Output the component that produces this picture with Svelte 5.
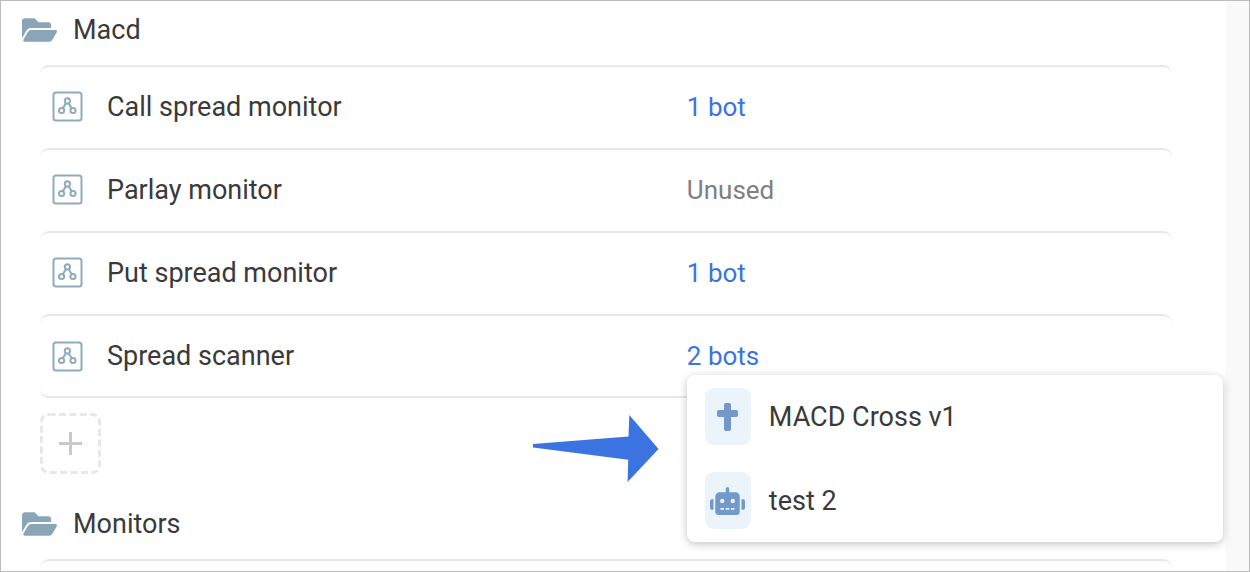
<script lang="ts">
  type Automation = { name: string; bots: string[] };
  type Folder = { name: string; automations: Automation[] };

  const folders: Folder[] = [
    {
      name: "Macd",
      automations: [
        { name: "Call spread monitor", bots: ["MACD Cross v1"] },
        { name: "Parlay monitor", bots: [] },
        { name: "Put spread monitor", bots: ["MACD Cross v1"] },
        { name: "Spread scanner", bots: ["MACD Cross v1", "test 2"] },
      ],
    },
    {
      name: "Monitors",
      automations: [{ name: "", bots: [] }],
    },
  ];

  let openMenu = $state("Spread scanner");

  function toggle(name: string) {
    openMenu = openMenu === name ? "" : name;
  }
</script>

<div class="frame">
  <main class="page">
    {#each folders as folder (folder.name)}
      <section class="folder">
        <h2 class="folder-title">
          <svg class="folder-icon" viewBox="0 64 576 384" aria-hidden="true">
            <path d="M572.694 292.093L500.27 416.248A63.997 63.997 0 0 1 444.989 448H45.025c-18.523 0-30.064-20.093-20.731-36.093l72.424-124.155A64 64 0 0 1 152 256h399.964c18.523 0 30.064 20.093 20.73 36.093zM152 224h328v-48c0-26.51-21.49-48-48-48H272l-64-64H48C21.49 64 0 85.49 0 112v278.046l69.077-118.418C86.214 242.25 117.989 224 152 224z" />
          </svg>
          {folder.name}
        </h2>

        <ul class="automations">
          {#each folder.automations as automation (automation.name)}
            <li class="row">
              {#if automation.name}
                <div class="name">
                  <svg class="automation-icon" viewBox="0 0 31 31" aria-hidden="true">
                    <rect x="1.5" y="1.5" width="28" height="28" rx="2.5" />
                    <path d="M14 12.4 10.6 17.4M16.8 12.4 19.8 17.4" />
                    <circle cx="15.4" cy="9.9" r="2.6" />
                    <circle cx="9.6" cy="19.5" r="2.6" />
                    <circle cx="21" cy="19.5" r="2.6" />
                  </svg>
                  <span>{automation.name}</span>
                </div>
                <div class="usage">
                  {#if automation.bots.length}
                    <button
                      type="button"
                      class="bots"
                      aria-expanded={openMenu === automation.name}
                      onclick={() => toggle(automation.name)}
                    >
                      {automation.bots.length} {automation.bots.length === 1 ? "bot" : "bots"}
                    </button>
                  {:else}
                    <span class="unused">Unused</span>
                  {/if}

                  {#if openMenu === automation.name}
                    <div class="menu">
                      {#each automation.bots as bot (bot)}
                        <a class="bot" href="#bot">
                          <span class="badge">
                            {#if bot === "test 2"}
                              <svg viewBox="0 0 640 512" aria-hidden="true">
                                <path d="M32 224h32v192H32a32 32 0 0 1-32-32V256a32 32 0 0 1 32-32zm512-48v272a64 64 0 0 1-64 64H160a64 64 0 0 1-64-64V176a80 80 0 0 1 80-80h112V32a32 32 0 0 1 64 0v64h112a80 80 0 0 1 80 80zM264 256a40 40 0 1 0-40 40 40 40 0 0 0 40-40zm-8 128h-64v32h64zm96 0h-64v32h64zm104-128a40 40 0 1 0-40 40 40 40 0 0 0 40-40zm-8 128h-64v32h64zm192-128v128a32 32 0 0 1-32 32h-32V224h32a32 32 0 0 1 32 32z" />
                              </svg>
                            {:else}
                              <svg viewBox="0 0 384 512" aria-hidden="true">
                                <path d="M352 128h-96V32c0-17.67-14.33-32-32-32h-64c-17.67 0-32 14.33-32 32v96H32c-17.67 0-32 14.33-32 32v64c0 17.67 14.33 32 32 32h96v224c0 17.67 14.33 32 32 32h64c17.67 0 32-14.33 32-32V256h96c17.67 0 32-14.33 32-32v-64c0-17.67-14.33-32-32-32z" />
                              </svg>
                            {/if}
                          </span>
                          {bot}
                        </a>
                      {/each}
                      <svg class="pointer" viewBox="0 0 126 67" aria-hidden="true">
                        <path d="M0 29 95.5 21.5 96.3 0 125.5 34 94.6 67 95.2 44.8 0 32.5z" />
                      </svg>
                    </div>
                  {/if}
                </div>
              {/if}
            </li>
          {/each}
        </ul>

        <button type="button" class="add" aria-label="Add automation to {folder.name}">
          <svg viewBox="0 0 61 61" aria-hidden="true">
            <rect x="1.5" y="1.5" width="58" height="58" rx="7" />
            <path d="M19 30.5h23M30.5 19v23" />
          </svg>
        </button>
      </section>
    {/each}
  </main>
</div>

<style>
  .frame {
    box-sizing: border-box;
    height: 100vh;
    padding-right: 23px;
    overflow: hidden;
    background: #f9f9f9;
    border: 1px solid #bcbcbc;
    color: #3a3a3a;
    font-family: Roboto, "Noto Sans", sans-serif;
    font-size: 27px;
    line-height: 36px;
  }
  .page {
    min-height: 100%;
    background: #fff;
  }
  .folder-title {
    display: flex;
    align-items: center;
    gap: 16px;
    height: 57px;
    margin: 0 0 7px;
    padding-left: 21px;
    font: inherit;
  }
  .folder-icon {
    width: 35px;
    height: 24px;
    fill: #8aa5b7;
  }
  .automations {
    margin: 0 54px 15px 39px;
    padding: 0;
    list-style: none;
  }
  .row {
    box-sizing: border-box;
    display: grid;
    grid-template-columns: 4fr 3fr;
    align-items: center;
    height: 83px;
    padding-bottom: 2px;
    border-top: 2px solid #e4e6f0;
    border-radius: 9px;
  }
  .row:last-child {
    height: 84px;
    padding-bottom: 0;
    border-bottom: 2px solid #e4e6f0;
  }
  .name {
    display: flex;
    align-items: center;
    gap: 24px;
    padding-left: 12px;
  }
  .automation-icon {
    width: 31px;
    height: 31px;
    fill: none;
    stroke: #8eacbe;
    stroke-width: 2;
  }
  .usage {
    position: relative;
    font-size: 26px;
  }
  .bots {
    display: block;
    padding: 0;
    border: none;
    background: none;
    color: #3b74e0;
    font: inherit;
    cursor: pointer;
  }
  .unused {
    color: #808080;
  }
  .menu {
    position: absolute;
    top: 100%;
    left: 0;
    z-index: 1;
    box-sizing: border-box;
    display: flex;
    flex-direction: column;
    gap: 27px;
    width: 536px;
    margin-top: 1px;
    padding: 13px 18px;
    background: #fff;
    border-radius: 8px;
    box-shadow: 0 2px 8px rgba(0, 0, 0, 0.24);
    font-size: 27px;
  }
  .bot {
    display: flex;
    align-items: center;
    gap: 18px;
    color: inherit;
    text-decoration: none;
  }
  .badge {
    display: flex;
    align-items: center;
    justify-content: center;
    width: 46px;
    height: 57px;
    background: #ecf4fb;
    border-radius: 9px;
  }
  .badge svg {
    height: 28px;
    fill: #7398ca;
  }
  .pointer {
    position: absolute;
    top: 40px;
    right: 100%;
    width: 126px;
    height: 67px;
    margin-right: 28px;
    fill: #3b74e0;
  }
  .add {
    display: block;
    margin: 0 0 21px 39px;
    padding: 0;
    border: none;
    background: none;
    cursor: pointer;
  }
  .add svg {
    display: block;
    width: 61px;
    height: 61px;
    fill: none;
    stroke: #c9c9c9;
    stroke-width: 3;
  }
  .add rect {
    stroke: #e8e8e8;
    stroke-dasharray: 7 3.4;
  }
</style>
